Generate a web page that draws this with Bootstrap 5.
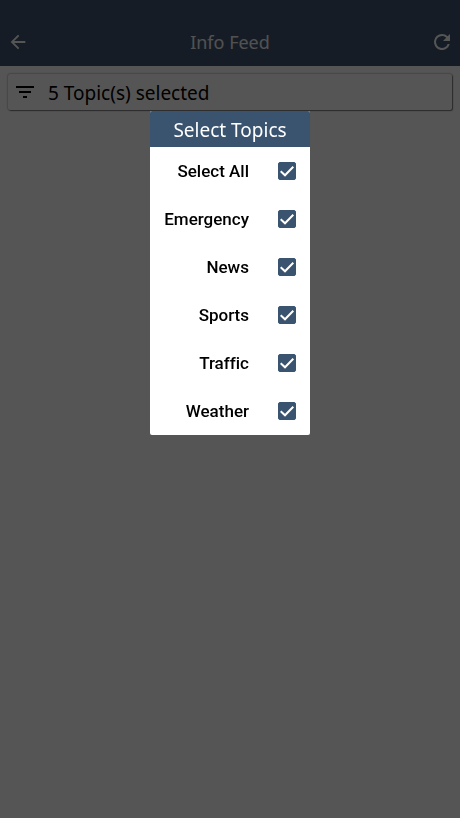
<!DOCTYPE html>
<html lang="en">
<head>
<meta charset="utf-8">
<meta name="viewport" content="width=device-width, initial-scale=1">
<title>Info Feed</title>
<link href="https://cdn.jsdelivr.net/npm/bootstrap@5.3.0/dist/css/bootstrap.min.css" rel="stylesheet">
<style>
  body { font-family: "Noto Sans", "Open Sans", sans-serif; background: #fff; }
  .app-header { background: #40566f; color: #fff; padding: 20px 6px 2px 6px; }
  .app-header h1 { font-size: 18px; line-height: 44px; color: #f2f4f6; }
  .icon-btn { width: 24px; height: 24px; color: #fff; }
  .icon-btn svg { display: block; margin: auto; fill: currentColor; }
  .filter-btn { height: 36px; padding: 0 6px; gap: 12px; font-size: 19px; line-height: 36px; color: #000;
    background: #fff; border: 0; border-radius: 2px; box-shadow: 0 0 2px rgba(0, 0, 0, .6), 1px 1px 1px rgba(0, 0, 0, .4); }
  .filter-btn span { padding-top: 2px; }
  .modal.topics { background: rgba(0, 0, 0, .667); }
  .topics .modal-dialog { width: 160px; margin: 111px auto 0; }
  .topics .modal-content { border: 0; border-radius: 2px; overflow: hidden; }
  .topics .modal-header { background: #3a5470; color: #fff; border-radius: 0; }
  .topics .modal-title { font-size: 19px; line-height: 34px; padding-top: 2px; font-weight: 400; }
  .topic-row { height: 48px; padding: 0 14px 0 8px; gap: 29px; font-family: Roboto, sans-serif; color: #000; }
  .topic-row label { font-size: 17px; line-height: 24px; font-weight: 500; font-variant-ligatures: none; }
  .topic-row .form-check-input { width: 18px; height: 18px; border-radius: 2px; }
  .topic-row .form-check-input:checked { background-color: #3a5470; border-color: #3a5470; background-size: 18px 18px;
    background-image: url("data:image/svg+xml,%3csvg xmlns='http://www.w3.org/2000/svg' viewBox='0 0 18 18'%3e%3cpath fill='none' stroke='%23fff' stroke-width='2' d='M2.7 9.2 7 13.3 15.3 4.8'/%3e%3c/svg%3e"); }
</style>
<script defer src="https://cdn.jsdelivr.net/npm/bootstrap@5.3.0/dist/js/bootstrap.bundle.min.js"></script>
</head>
<body>
<header class="app-header d-flex align-items-center justify-content-between">
  <button type="button" class="icon-btn btn p-0 border-0" aria-label="Back">
    <svg width="22" height="22" viewBox="0 0 24 24"><path d="M20 11H7.83l5.59-5.59L12 4l-8 8 8 8 1.41-1.41L7.83 13H20z"/></svg>
  </button>
  <h1 class="m-0 fw-normal">Info Feed</h1>
  <button type="button" class="icon-btn btn p-0 border-0" aria-label="Refresh">
    <svg width="24" height="24" viewBox="0 0 24 24"><path d="M17.65 6.35A7.96 7.96 0 0 0 12 4a8 8 0 1 0 7.73 10h-2.08A6 6 0 1 1 12 6c1.66 0 3.14.69 4.22 1.78L13 11h7V4z"/></svg>
  </button>
</header>
<main class="px-2 pt-2 pb-4">
  <button type="button" class="filter-btn d-flex align-items-center w-100 text-start">
    <svg width="22" height="24" viewBox="0 0 22 24" fill="none" stroke="#000" stroke-width="2"><path d="M2 7h18M5 12h12M9 17h4"/></svg>
    <span>5 Topic(s) selected</span>
  </button>
</main>
<div class="modal topics d-block" role="dialog" aria-modal="true" aria-labelledby="topics-title">
  <div class="modal-dialog">
    <div class="modal-content">
      <div class="modal-header justify-content-center p-0 border-0"><h2 class="modal-title" id="topics-title">Select Topics</h2></div>
      <div class="modal-body p-0">
        <div class="topic-row d-flex align-items-center justify-content-end"><label for="t-all">Select All</label><input class="form-check-input m-0 flex-shrink-0" type="checkbox" id="t-all" checked></div>
        <div class="topic-row d-flex align-items-center justify-content-end"><label for="t-emergency">Emergency</label><input class="form-check-input m-0 flex-shrink-0" type="checkbox" id="t-emergency" checked></div>
        <div class="topic-row d-flex align-items-center justify-content-end"><label for="t-news">News</label><input class="form-check-input m-0 flex-shrink-0" type="checkbox" id="t-news" checked></div>
        <div class="topic-row d-flex align-items-center justify-content-end"><label for="t-sports">Sports</label><input class="form-check-input m-0 flex-shrink-0" type="checkbox" id="t-sports" checked></div>
        <div class="topic-row d-flex align-items-center justify-content-end"><label for="t-traffic">Traffic</label><input class="form-check-input m-0 flex-shrink-0" type="checkbox" id="t-traffic" checked></div>
        <div class="topic-row d-flex align-items-center justify-content-end"><label for="t-weather">Weather</label><input class="form-check-input m-0 flex-shrink-0" type="checkbox" id="t-weather" checked></div>
      </div>
    </div>
  </div>
</div>
</body>
</html>
